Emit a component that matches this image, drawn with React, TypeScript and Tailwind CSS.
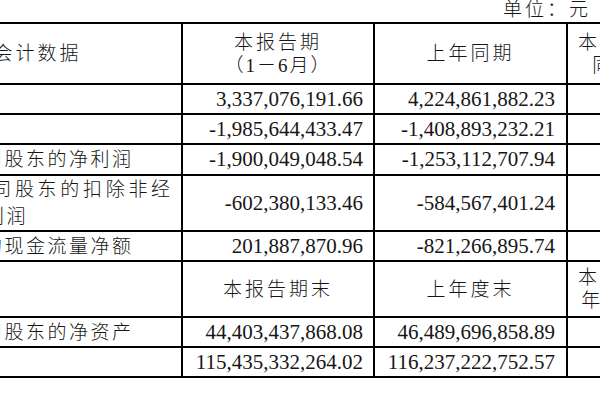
import React from "react";

const num = "bg-white flex items-center justify-end text-[21px] leading-none tracking-[0px]";
const label = "bg-white flex items-center pl-[4px] text-[19px] leading-[23px] tracking-[2.5px] whitespace-nowrap";
const head = "bg-white flex flex-col items-center justify-center text-[19px] leading-[23px] tracking-[3px] whitespace-nowrap";

type Row = { label: React.ReactNode; a: string; b: string };

const rowsTop: Row[] = [
  { label: "营业收入", a: "3,337,076,191.66", b: "4,224,861,882.23" },
  { label: "利润总额", a: "-1,985,644,433.47", b: "-1,408,893,232.21" },
  { label: "归属于上市公司股东的净利润", a: "-1,900,049,048.54", b: "-1,253,112,707.94" },
];

export default function App() {
  return (
    <div className="w-[600px] h-[400px] overflow-hidden bg-white text-[#161616] font-['Liberation_Serif','Noto_Sans_CJK_SC',serif] font-light">
      <div className="h-[22px] flex justify-end items-start pr-[9px] text-[19px] leading-[20px] tracking-[3px]">
        单位：元
      </div>
      <div className="ml-[-152px] w-max grid grid-cols-[331px_190px_191px_174px] grid-rows-[59px_28px_28px_29px_54px_28px_54px_28px_28px] gap-[2px] p-[2px] bg-black">
        {/* header */}
        <div className={`${head} tracking-[1px]`}>主要会计数据</div>
        <div className={head}>
          <span>本报告期</span>
          <span className="tracking-[2px]">（1－6月）</span>
        </div>
        <div className={head}>上年同期</div>
        <div className={head}>
          <span>本报告期比上年</span>
          <span>同期增减(%)</span>
        </div>

        {rowsTop.map((r, i) => (
          <React.Fragment key={i}>
            <div className={label}>{r.label}</div>
            <div className={`${num} pr-[10px]`}>{r.a}</div>
            <div className={`${num} pr-[11px]`}>{r.b}</div>
            <div className="bg-white" />
          </React.Fragment>
        ))}

        <div className="bg-white flex flex-col justify-center pl-[6px] text-[19px] leading-[27px] whitespace-nowrap">
          <span className="tracking-[3.7px]">归属于上市公司股东的扣除非经</span>
          <span className="tracking-[2.5px]">常性损益的净利润</span>
        </div>
        <div className={`${num} pr-[10px]`}>-602,380,133.46</div>
        <div className={`${num} pr-[11px]`}>-584,567,401.24</div>
        <div className="bg-white" />

        <div className={label}>经营活动产生的现金流量净额</div>
        <div className={`${num} pr-[10px]`}>201,887,870.96</div>
        <div className={`${num} pr-[11px]`}>-821,266,895.74</div>
        <div className="bg-white" />

        {/* sub header */}
        <div className="bg-white" />
        <div className={`${head} tracking-[2px]`}>本报告期末</div>
        <div className={head}>上年度末</div>
        <div className={`${head} tracking-[2.5px]`}>
          <span>本报告期末比上</span>
          <span>年度末增减(%)</span>
        </div>

        <div className={label}>归属于上市公司股东的净资产</div>
        <div className={`${num} pr-[10px]`}>44,403,437,868.08</div>
        <div className={`${num} pr-[11px]`}>46,489,696,858.89</div>
        <div className="bg-white" />

        <div className={label}>总资产</div>
        <div className={`${num} pr-[10px]`}>115,435,332,264.02</div>
        <div className={`${num} pr-[11px]`}>116,237,222,752.57</div>
        <div className="bg-white" />
      </div>
    </div>
  );
}
